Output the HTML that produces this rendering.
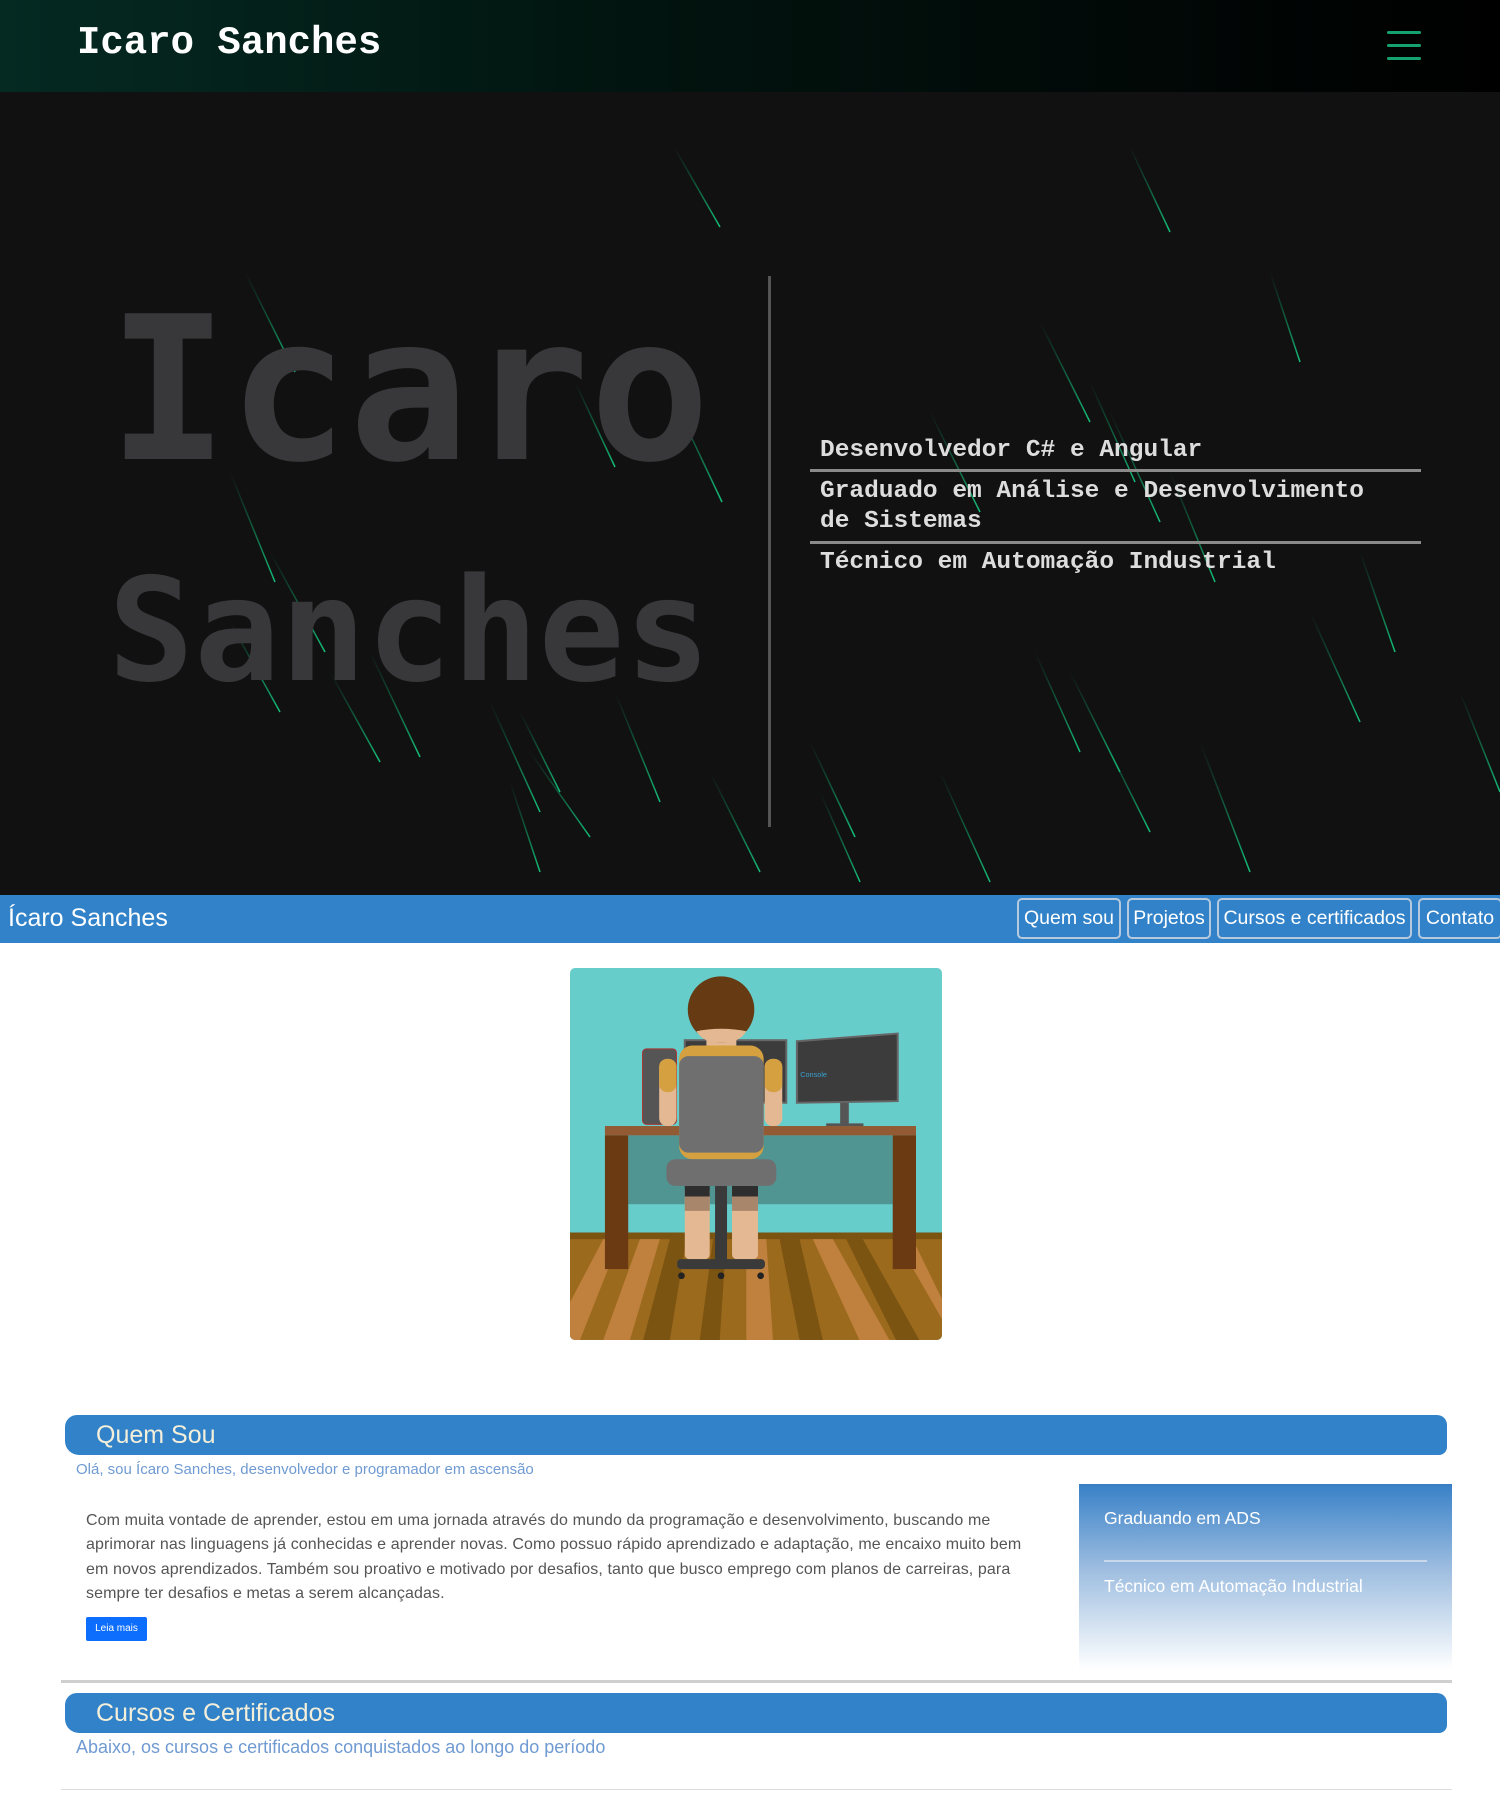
<!DOCTYPE html>
<html><head><meta charset="utf-8"><style>
*{margin:0;padding:0;box-sizing:border-box}
body{width:1500px;height:1800px;background:#fff;position:relative;overflow:hidden;font-family:"Liberation Sans",sans-serif}
.abs{position:absolute}
#top{left:0;top:0;width:1500px;height:92px;background:linear-gradient(90deg,#042a22 0%,#021510 40%,#000 100%)}
#top .t{left:77px;top:18px;font:bold 39px/50px "Liberation Mono",monospace;color:#fff}
.hb{left:1387px;width:34px;height:3px;background:#15a26e;border-radius:2px}
#hero{left:0;top:92px;width:1500px;height:803px;background:#111;overflow:hidden}
.big{font-family:"DejaVu Sans Mono","Liberation Mono",monospace;font-weight:bold;color:#38383b;white-space:nowrap}
.li{left:820px;font:bold 24.5px/30px "Liberation Mono",monospace;color:#ddd;white-space:nowrap}
.hl{left:810px;width:611px;height:3px;background:#8a8a8a}
#bar{left:0;top:895px;width:1500px;height:48px;background:#3182c8}
.btn{top:898px;height:41px;border:2px solid #b7c9dc;border-radius:5px;color:#fff;font-size:19.5px;line-height:37px;text-align:center;white-space:nowrap}
.sec{left:65px;width:1382px;height:40px;background:#3182c8;border-radius:12px 10px 8px 14px;color:#f4efda;font-size:25px;line-height:40px;padding-left:31px;font-weight:300}
</style></head><body>
<div id="top" class="abs"><div class="t abs">Icaro Sanches</div>
<div class="hb abs" style="top:31px"></div><div class="hb abs" style="top:44px"></div><div class="hb abs" style="top:57px"></div></div>
<div id="hero" class="abs">
<svg class="abs" style="left:0;top:0" width="1500" height="803">
<defs><linearGradient id="g" x1="0" y1="0" x2="0" y2="1"><stop offset="0" stop-color="#0c8f5c" stop-opacity="0"/><stop offset="1" stop-color="#14c07a"/></linearGradient></defs>
<g stroke="url(#g)" stroke-width="1.5">
<line x1="674" y1="55" x2="720" y2="135"/><line x1="1130" y1="55" x2="1170" y2="140"/>
<line x1="245" y1="180" x2="295" y2="280"/><line x1="575" y1="290" x2="615" y2="375"/>
<line x1="670" y1="300" x2="722" y2="410"/><line x1="1040" y1="230" x2="1090" y2="330"/>
<line x1="1090" y1="290" x2="1135" y2="390"/><line x1="1110" y1="320" x2="1160" y2="430"/>
<line x1="1270" y1="180" x2="1300" y2="270"/><line x1="930" y1="320" x2="980" y2="420"/>
<line x1="1170" y1="380" x2="1215" y2="490"/><line x1="1360" y1="460" x2="1395" y2="560"/>
<line x1="230" y1="380" x2="275" y2="490"/><line x1="270" y1="460" x2="325" y2="560"/>
<line x1="330" y1="580" x2="380" y2="670"/><line x1="370" y1="560" x2="420" y2="665"/>
<line x1="490" y1="610" x2="540" y2="720"/><line x1="520" y1="620" x2="560" y2="700"/>
<line x1="530" y1="660" x2="590" y2="745"/><line x1="615" y1="600" x2="660" y2="710"/>
<line x1="1035" y1="560" x2="1080" y2="660"/><line x1="1070" y1="580" x2="1120" y2="680"/>
<line x1="810" y1="650" x2="855" y2="745"/><line x1="820" y1="700" x2="860" y2="790"/>
<line x1="710" y1="680" x2="760" y2="780"/><line x1="1310" y1="520" x2="1360" y2="630"/>
<line x1="1100" y1="640" x2="1150" y2="740"/><line x1="1200" y1="650" x2="1250" y2="780"/>
<line x1="940" y1="680" x2="990" y2="790"/><line x1="230" y1="530" x2="280" y2="620"/>
<line x1="510" y1="690" x2="540" y2="780"/><line x1="1460" y1="600" x2="1500" y2="700"/>
</g></svg>
<div class="big abs" style="left:108px;top:169px;font-size:200px;line-height:260px">Icaro</div>
<div class="big abs" style="left:108px;top:439px;font-size:143px;line-height:200px">Sanches</div>
<div class="abs" style="left:768px;top:184px;width:3px;height:551px;background:#555"></div>
<div class="li abs" style="top:344px">Desenvolvedor C# e Angular</div>
<div class="hl abs" style="top:377px"></div>
<div class="li abs" style="top:385px">Graduado em Análise e Desenvolvimento<br>de Sistemas</div>
<div class="hl abs" style="top:449px"></div>
<div class="li abs" style="top:456px">Técnico em Automação Industrial</div>
</div>
<div id="bar" class="abs"><div class="abs" style="left:8px;top:8px;color:#fff;font-size:25px;line-height:30px;font-weight:300">Ícaro Sanches</div></div>
<div class="btn abs" style="left:1017px;width:104px">Quem sou</div>
<div class="btn abs" style="left:1127px;width:84px">Projetos</div>
<div class="btn abs" style="left:1217px;width:195px">Cursos e certificados</div>
<div class="btn abs" style="left:1418px;width:84px">Contato</div>

<svg class="abs" style="left:570px;top:968px;border-radius:5px" width="372" height="372" viewBox="0 0 372 372">
<g transform="scale(0.3327) translate(-30,-25)">
<rect x="30" y="25" width="1118" height="1118" fill="#66cdcb"/>
<rect x="30" y="820" width="1118" height="323" fill="#9c6a1d"/>
<rect x="30" y="820" width="1118" height="20" fill="#7b5412"/>
<g fill="#c0813e">
<polygon points="30,1030 130,840 180,840 60,1143 30,1143"/>
<polygon points="240,840 300,840 210,1143 130,1143"/>
<polygon points="560,840 620,840 640,1143 560,1143"/>
<polygon points="760,840 820,840 990,1143 900,1143"/>
<polygon points="1010,840 1060,840 1148,1020 1148,1080"/>
</g>
<g fill="#7b5412">
<polygon points="330,840 380,840 330,1143 250,1143"/>
<polygon points="660,840 720,840 790,1143 720,1143"/>
<polygon points="860,840 910,840 1080,1143 1010,1143"/>
<polygon points="460,840 500,840 480,1143 420,1143"/>
</g>
<rect x="205" y="528" width="795" height="207" fill="#519593"/>
<rect x="135" y="500" width="935" height="28" fill="#935b34"/>
<rect x="135" y="528" width="70" height="402" fill="#6b3a12"/>
<rect x="1000" y="528" width="70" height="402" fill="#6b3a12"/>
<rect x="375" y="242" width="305" height="188" fill="#3c3c3c" stroke="#666" stroke-width="6"/>
<polygon points="712,245 1015,222 1015,425 712,430" fill="#3c3c3c" stroke="#666" stroke-width="6"/>
<text x="722" y="352" font-size="22" fill="#3aa0d0" font-family="Liberation Sans">Console</text>
<rect x="842" y="430" width="26" height="65" fill="#555"/>
<rect x="800" y="492" width="112" height="8" fill="#555"/>
<rect x="248" y="268" width="102" height="227" rx="12" fill="#555" stroke="#a33" stroke-width="3"/>
<rect x="440" y="200" width="90" height="60" fill="#e3b892"/>
<rect x="358" y="258" width="254" height="342" rx="40" fill="#d4a040"/>
<rect x="298" y="298" width="52" height="202" rx="24" fill="#e3b892"/>
<rect x="615" y="298" width="53" height="202" rx="24" fill="#e3b892"/>
<rect x="298" y="298" width="52" height="100" rx="24" fill="#d4a040"/>
<rect x="615" y="298" width="53" height="100" rx="24" fill="#d4a040"/>
<circle cx="484" cy="150" r="100" fill="#663a12"/>
<path d="M410,215 Q484,200 560,215 Q540,250 484,250 Q430,250 410,215Z" fill="#e3b892"/>
<rect x="358" y="290" width="254" height="290" rx="28" fill="#6f6f6f"/>
<rect x="375" y="680" width="75" height="220" rx="14" fill="#e3b892"/>
<rect x="517" y="680" width="78" height="220" rx="14" fill="#e3b892"/>
<rect x="375" y="680" width="75" height="32" fill="#2e2e2e"/><rect x="517" y="680" width="78" height="32" fill="#2e2e2e"/>
<rect x="375" y="712" width="75" height="43" fill="#a8866c"/><rect x="517" y="712" width="78" height="43" fill="#a8866c"/>
<rect x="466" y="680" width="36" height="225" fill="#3a3a3a"/>
<rect x="352" y="900" width="264" height="30" rx="12" fill="#3a3a3a"/>
<circle cx="365" cy="950" r="10" fill="#222"/><circle cx="484" cy="950" r="10" fill="#222"/><circle cx="603" cy="950" r="10" fill="#222"/>
<rect x="320" y="600" width="330" height="80" rx="26" fill="#6f6f6f"/>
</g></svg>

<div class="sec abs" style="top:1415px">Quem Sou</div>
<div class="abs" style="left:76px;top:1461px;font-size:15px;color:#6f9ad2;font-weight:300">Olá, sou Ícaro Sanches, desenvolvedor e programador em ascensão</div>
<div class="abs" style="left:86px;top:1509px;width:960px;font-size:16px;line-height:24.4px;color:#555;letter-spacing:0.1px">Com muita vontade de aprender, estou em uma jornada através do mundo da programação e desenvolvimento, buscando me aprimorar nas linguagens já conhecidas e aprender novas. Como possuo rápido aprendizado e adaptação, me encaixo muito bem em novos aprendizados. Também sou proativo e motivado por desafios, tanto que busco emprego com planos de carreiras, para sempre ter desafios e metas a serem alcançadas.</div>
<div class="abs" style="left:86px;top:1617px;width:61px;height:24px;background:#0d6efd;border-radius:2px;color:#fff;font-size:10px;line-height:24px;text-align:center">Leia mais</div>
<div class="abs" style="left:1079px;top:1484px;width:373px;height:186px;background:linear-gradient(180deg,#3a82c8 0%,#9dbde0 45%,#fff 100%);border-top:2px solid #3a7fc4"></div>
<div class="abs" style="left:1104px;top:1508px;color:#fff;font-size:17.5px;font-weight:300">Graduando em ADS</div>
<div class="abs" style="left:1104px;top:1560px;width:323px;height:2px;background:#c8d8ea"></div>
<div class="abs" style="left:1104px;top:1576px;color:#fff;font-size:17.5px;font-weight:300">Técnico em Automação Industrial</div>
<div class="abs" style="left:61px;top:1680px;width:1391px;height:3px;background:#cfcfcf"></div>
<div class="sec abs" style="top:1693px">Cursos e Certificados</div>
<div class="abs" style="left:76px;top:1737px;font-size:18px;color:#6f9ad2;font-weight:300">Abaixo, os cursos e certificados conquistados ao longo do período</div>
<div class="abs" style="left:61px;top:1789px;width:1391px;height:1px;background:#ddd"></div>
</body></html>
